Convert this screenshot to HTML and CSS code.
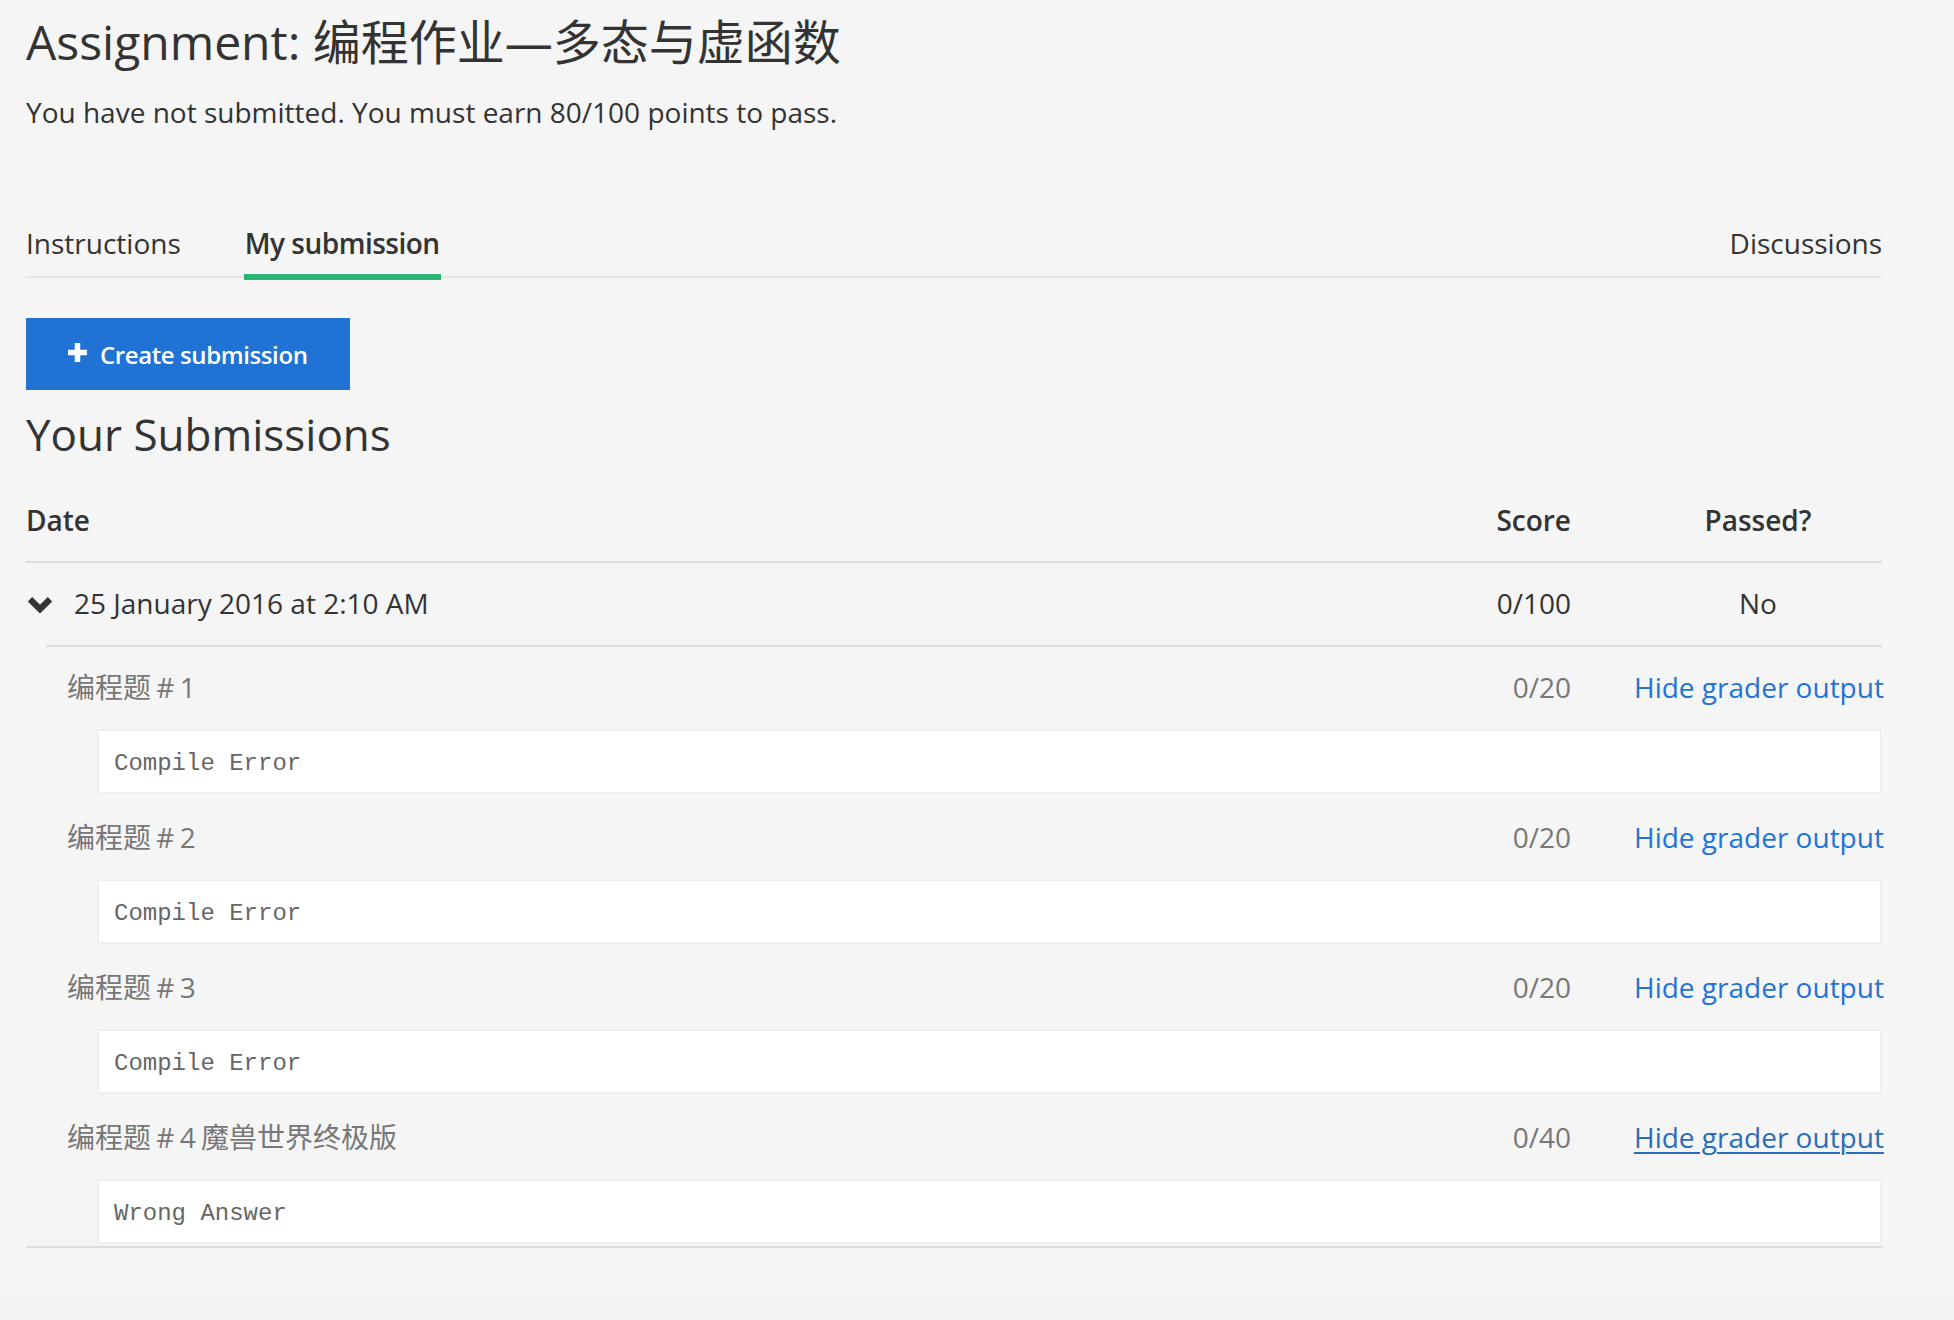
FILE: index.html
```html
<!DOCTYPE html>
<html lang="en">
<head>
<meta charset="utf-8">
<title>Assignment</title>
<link rel="stylesheet" href="styles.css">
</head>
<body>
<div class="page">
  <h1 class="title">Assignment: 编程作业—多态与虚函数</h1>
  <p class="subtitle">You have not submitted. You must earn 80/100 points to pass.</p>

  <nav class="tabs">
    <a class="tab">Instructions</a>
    <a class="tab active">My submission</a>
    <a class="tab tab-right">Discussions</a>
  </nav>

  <button class="create-btn">
    <svg class="plus" width="19" height="19" viewBox="0 0 19 19"><path d="M9.5 0v19M0 9.5h19" stroke="#fff" stroke-width="5.5"/></svg>
    <span>Create submission</span>
  </button>

  <h2 class="section-title">Your Submissions</h2>

  <div class="table">
    <div class="head-row">
      <div class="c-date">Date</div>
      <div class="c-score">Score</div>
      <div class="c-pass">Passed?</div>
    </div>

    <div class="submission">
      <div class="sub-row">
        <div class="c-date date-cell">
          <svg class="chev" width="26" height="17" viewBox="0 0 26 17"><path d="M3 3.2l10 10 10-10" fill="none" stroke="#333" stroke-width="6.2" stroke-linecap="butt" stroke-linejoin="miter"/></svg>
          <span>25 January 2016 at 2:10 AM</span>
        </div>
        <div class="c-score">0/100</div>
        <div class="c-pass">No</div>
      </div>

      <div class="details">
        <div class="item">
          <div class="item-head">
            <div class="item-name">编程题 # 1</div>
            <div class="c-score item-score">0/20</div>
            <a class="c-link link">Hide grader output</a>
          </div>
          <pre class="output">Compile Error</pre>
        </div>
        <div class="item">
          <div class="item-head">
            <div class="item-name">编程题 # 2</div>
            <div class="c-score item-score">0/20</div>
            <a class="c-link link">Hide grader output</a>
          </div>
          <pre class="output">Compile Error</pre>
        </div>
        <div class="item">
          <div class="item-head">
            <div class="item-name">编程题 # 3</div>
            <div class="c-score item-score">0/20</div>
            <a class="c-link link">Hide grader output</a>
          </div>
          <pre class="output">Compile Error</pre>
        </div>
        <div class="item">
          <div class="item-head">
            <div class="item-name">编程题 # 4 魔兽世界终极版</div>
            <div class="c-score item-score">0/40</div>
            <a class="c-link link hover">Hide grader output</a>
          </div>
          <pre class="output">Wrong Answer</pre>
        </div>
      </div>
    </div>
  </div>
</div>
<div class="footer-strip"></div>
</body>
</html>
```

FILE: styles.css
```css
* { box-sizing: border-box; }

html, body {
  margin: 0;
  padding: 0;
  background: #f5f5f5;
}

body {
  font-family: "Open Sans", "Noto Sans CJK SC", sans-serif;
  color: #333;
  height: 1320px;
  display: flex;
  flex-direction: column;
}

.page {
  width: 1856px;
  margin-left: 26px;
  padding-top: 13px;
  flex: 1;
}

.title {
  margin: 0;
  font-size: 48px;
  line-height: 58px;
  font-weight: 400;
  color: #333;
}

.subtitle {
  margin: 20px 0 0;
  font-size: 28px;
  line-height: 42px;
  color: #333;
}

.tabs {
  margin-top: 89px;
  display: flex;
  align-items: flex-end;
  gap: 64px;
  border-bottom: 2px solid #e6e6e6;
}

.tab {
  font-size: 28px;
  line-height: 42px;
  padding-bottom: 10px;
  border-bottom: 6px solid transparent;
  margin-bottom: -4px;
  color: #333;
  cursor: pointer;
}

.tab.active {
  font-weight: 600;
  letter-spacing: -0.5px;
  border-bottom-color: #2bb673;
  padding-left: 1px;
  padding-right: 1px;
  margin-left: -1px;
}

.tab-right {
  margin-left: auto;
}

.create-btn {
  margin-top: 40px;
  height: 72px;
  display: inline-flex;
  align-items: center;
  gap: 13px;
  padding: 0 42px;
  background: #2073d4;
  color: #fff;
  border: none;
  font-family: "Open Sans", sans-serif;
  font-size: 24px;
  font-weight: 600;
  letter-spacing: -0.4px;
  cursor: pointer;
}

.plus {
  display: block;
  margin-top: -3px;
}

.section-title {
  margin: 18px 0 0;
  font-size: 44px;
  line-height: 53px;
  font-weight: 400;
  color: #333;
}

.table {
  margin-top: 38px;
}

.head-row,
.sub-row,
.item-head {
  display: grid;
  grid-template-columns: 1fr auto 248px;
  column-gap: 63px;
  align-items: baseline;
}

.head-row {
  font-size: 28px;
  line-height: 42px;
  font-weight: 600;
  padding-bottom: 20px;
  border-bottom: 2px solid #ddd;
}

.c-score { text-align: right; }
.c-pass { text-align: center; }
.c-link { text-align: right; white-space: nowrap; }

.submission {
  border-bottom: 2px solid #ddd;
}

.sub-row {
  font-size: 28px;
  line-height: 42px;
  padding: 19px 0 21px;
  align-items: center;
}

.date-cell {
  display: flex;
  align-items: center;
  gap: 21px;
}

.chev {
  display: block;
  margin-left: 1px;
  margin-top: 3px;
}

.details {
  margin-left: 20px;
  border-top: 2px solid #ddd;
  padding: 19px 0 2px 21px;
  display: flex;
  flex-direction: column;
  gap: 22px;
}

.item-head {
  font-size: 28px;
  line-height: 42px;
  color: #777;
}

.item-name {
  color: #777;
  word-spacing: -2px;
}

.item-score {
  color: #777;
}

.link {
  color: #2174d6;
  text-decoration: none;
  cursor: pointer;
}

.link.hover {
  color: #2a6db8;
  text-decoration: underline;
  text-decoration-thickness: 2px;
  text-underline-offset: 4px;
}

.output {
  margin: 21px 0 0 30px;
  height: 65px;
  background: #fff;
  border: 2px solid #efefef;
  padding: 13px 15px 9px;
  font-family: "Liberation Mono", "Courier New", monospace;
  font-size: 24px;
  line-height: 39px;
  color: #666;
  white-space: pre;
}

.footer-strip {
  height: 22px;
  background: #f2f2f2;
}
```
